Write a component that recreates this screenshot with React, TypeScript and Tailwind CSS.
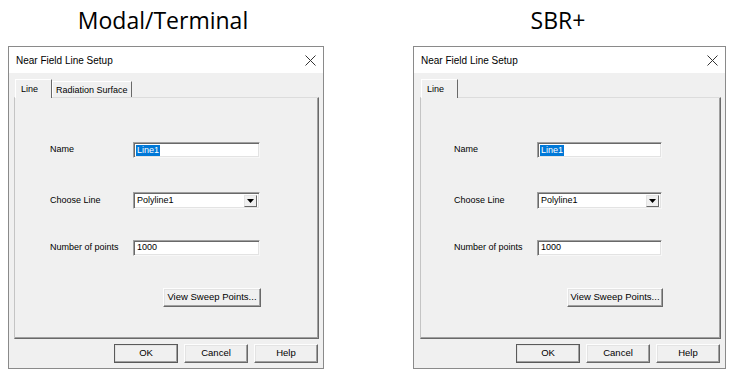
import React from "react";

const UI_FONT = "font-['Liberation_Sans',Arial,sans-serif]";

type DialogProps = {
  width: string;
  showRadiation: boolean;
  labelPad: string;
  inputWidth: string;
  sweepLeft: string;
  sweepWidth: string;
  panelLeft: string;
};

function CloseIcon() {
  return (
    <svg width="11" height="11" viewBox="0 0 11 11" className="text-[#333]">
      <path d="M0.5 0.5 L10.5 10.5 M10.5 0.5 L0.5 10.5" stroke="currentColor" strokeWidth="1" fill="none" />
    </svg>
  );
}

function SunkenBox({ width, children }: { width: string; children: React.ReactNode }) {
  return (
    <div
      className={`${width} h-[16px] bg-white border border-t-[#a0a0a0] border-l-[#a0a0a0] border-r-[#f7f7f7] border-b-[#f7f7f7] shadow-[inset_1px_1px_0_#696969,inset_-1px_-1px_0_#e3e3e3] flex items-center`}
    >
      {children}
    </div>
  );
}

function RaisedButton({ label, className = "", strong = false }: { label: string; className?: string; strong?: boolean }) {
  return (
    <div
      className={`${className} flex items-center justify-center bg-[#f0f0f0] border ${
        strong ? "border-[#5a5a5a]" : "border-t-[#fdfdfd] border-l-[#fdfdfd] border-r-[#696969] border-b-[#696969]"
      } shadow-[inset_-1px_-1px_0_#a0a0a0,inset_1px_1px_0_#e3e3e3] text-[9.5px] text-black`}
    >
      {label}
    </div>
  );
}

function Dialog({ width, showRadiation, labelPad, inputWidth, sweepLeft, sweepWidth, panelLeft }: DialogProps) {
  return (
    <div className={`${width} ml-[8px] mt-[12px] border border-[#8a8a8a] bg-[#f0f0f0] ${UI_FONT} text-black`}>
      {/* title bar */}
      <div className="h-[26px] bg-white flex items-center justify-between pl-[7px] pr-[7px]">
        <span className="text-[10px]">Near Field Line Setup</span>
        <CloseIcon />
      </div>

      <div className={`${panelLeft} pr-[4px] pt-[6px]`}>
        {/* tabs */}
        <div className="h-[18px] flex items-end pl-[1px]">
          <div className="relative z-10 h-[19px] -mb-[1px] w-[37px] bg-[#f0f0f0] border-l border-t border-r border-l-white border-t-white border-r-[#696969] text-[9px] pl-[5px] pt-[3px]">
            Line
          </div>
          {showRadiation && (
            <div className="h-[16px] w-[80px] border-t border-r border-t-white border-r-[#696969] shadow-[inset_1px_0_0_#ffffff] text-[9px] pl-[4px] pt-[2px]">
              Radiation Surface
            </div>
          )}
        </div>

        {/* panel */}
        <div className="h-[242px] border border-t-[#dcdcdc] border-l-[#c4c4c4] border-r-[#696969] border-b-[#696969] shadow-[inset_-1px_-1px_0_#a0a0a0]">
          <div className={`${labelPad} pt-[44px] text-[9px]`}>
            <div className="flex items-center">
              <span className="w-[83px]">Name</span>
              <SunkenBox width={inputWidth}>
                <span className="ml-[2px] bg-[#0078d7] text-white leading-[11px] px-[1px]">Line1</span>
              </SunkenBox>
            </div>

            <div className="flex items-center mt-[34px]">
              <span className="w-[83px]">Choose Line</span>
              <div
                className={`${inputWidth} h-[17px] bg-white border border-t-[#a0a0a0] border-l-[#a0a0a0] border-r-[#f7f7f7] border-b-[#f7f7f7] shadow-[inset_1px_1px_0_#696969,inset_-1px_-1px_0_#e3e3e3] flex items-center justify-between pr-[2px]`}
              >
                <span className="ml-[3px]">Polyline1</span>
                <div className="w-[13px] h-[12px] bg-[#f0f0f0] border border-t-[#e3e3e3] border-l-[#e3e3e3] border-r-[#696969] border-b-[#696969] flex items-center justify-center">
                  <svg width="7" height="4" viewBox="0 0 7 4">
                    <path d="M0 0 L7 0 L3.5 4 Z" fill="#000" />
                  </svg>
                </div>
              </div>
            </div>

            <div className="flex items-center mt-[31px]">
              <span className="w-[83px]">Number of points</span>
              <SunkenBox width={inputWidth}>
                <span className="ml-[3px]">1000</span>
              </SunkenBox>
            </div>
          </div>

          <RaisedButton label="View Sweep Points..." className={`${sweepLeft} ${sweepWidth} h-[19px] mt-[32px]`} />
        </div>

        {/* footer buttons */}
        <div className="flex justify-end gap-[6px] mt-[5px] pb-[5px] pr-[1px]">
          <RaisedButton label="OK" className="w-[64px] h-[19px]" strong />
          <RaisedButton label="Cancel" className="w-[64px] h-[19px]" />
          <RaisedButton label="Help" className="w-[64px] h-[19px]" />
        </div>
      </div>
    </div>
  );
}

export default function App() {
  return (
    <div className="w-[731px] h-[376px] bg-white flex overflow-hidden">
      <div className="w-[405px] pt-[6px]">
        <div className="ml-[8px] w-[316px] pr-[6px] text-center h-[28px] leading-[28px] text-[23px] text-black font-['Open_Sans',sans-serif]">
          Modal/Terminal
        </div>
        <Dialog
          width="w-[316px]"
          showRadiation
          panelLeft="pl-[5px]"
          labelPad="pl-[35px]"
          inputWidth="w-[127px]"
          sweepLeft="ml-[148px]"
          sweepWidth="w-[98px]"
        />
      </div>
      <div className="w-[326px] pt-[6px]">
        <div className="ml-[8px] w-[313px] pr-[23px] text-center h-[28px] leading-[28px] text-[23px] text-black font-['Open_Sans',sans-serif]">
          SBR+
        </div>
        <Dialog
          width="w-[313px]"
          showRadiation={false}
          panelLeft="pl-[6px]"
          labelPad="pl-[33px]"
          inputWidth="w-[125px]"
          sweepLeft="ml-[146px]"
          sweepWidth="w-[96px]"
        />
      </div>
    </div>
  );
}
